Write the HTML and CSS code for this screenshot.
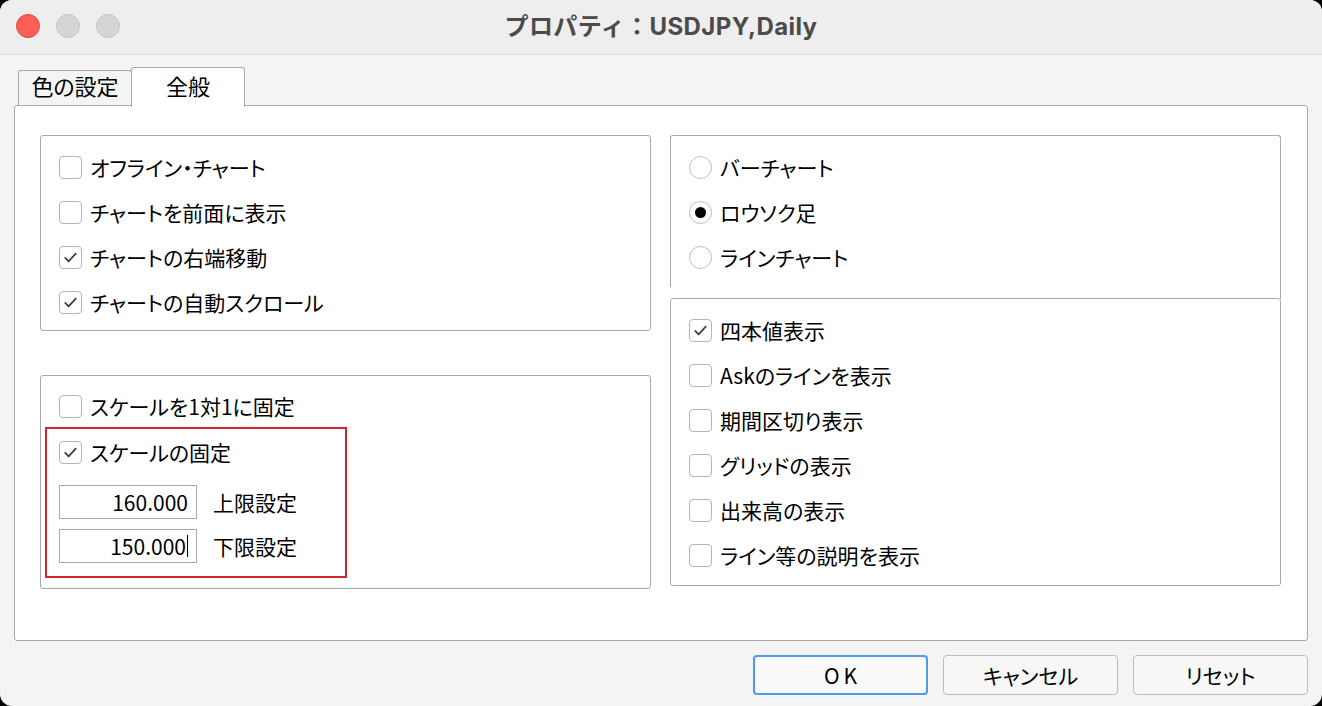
FILE: index.html
```html
<!DOCTYPE html>
<html lang="ja">
<head>
<meta charset="utf-8">
<title>プロパティ</title>
<link rel="stylesheet" href="styles.css">
</head>
<body>
<div class="window">
  <div class="titlebar">
    <div class="lights">
      <span class="light red"></span>
      <span class="light gray"></span>
      <span class="light gray"></span>
    </div>
    <div class="title">プロパティ：USDJPY,Daily</div>
  </div>
  <div class="content">
    <div class="tabs">
      <div class="tab">色の設定</div>
      <div class="tab active">全般</div>
    </div>
    <div class="panel">
      <div class="col">
        <div class="group g1">
          <div class="row"><span class="cb"></span><span class="lbl">オフライン・チャート</span></div>
          <div class="row"><span class="cb"></span><span class="lbl">チャートを前面に表示</span></div>
          <div class="row"><span class="cb checked"><svg viewBox="0 0 22 22"><path d="M5.5 11.5 L9 15 L16.5 7" /></svg></span><span class="lbl">チャートの右端移動</span></div>
          <div class="row"><span class="cb checked"><svg viewBox="0 0 22 22"><path d="M5.5 11.5 L9 15 L16.5 7" /></svg></span><span class="lbl">チャートの自動スクロール</span></div>
        </div>
        <div class="group g2">
          <div class="row first"><span class="cb"></span><span class="lbl">スケールを1対1に固定</span></div>
          <div class="redbox">
            <div class="row"><span class="cb checked"><svg viewBox="0 0 22 22"><path d="M5.5 11.5 L9 15 L16.5 7" /></svg></span><span class="lbl">スケールの固定</span></div>
            <div class="inrow"><span class="input">160.000</span><span class="lbl">上限設定</span></div>
            <div class="inrow"><span class="input">150.000<span class="caret"></span></span><span class="lbl">下限設定</span></div>
          </div>
        </div>
      </div>
      <div class="col">
        <div class="group g3">
          <div class="row"><span class="rb"></span><span class="lbl">バーチャート</span></div>
          <div class="row"><span class="rb on"></span><span class="lbl">ロウソク足</span></div>
          <div class="row"><span class="rb"></span><span class="lbl">ラインチャート</span></div>
        </div>
        <div class="group g4">
          <div class="row"><span class="cb checked"><svg viewBox="0 0 22 22"><path d="M5.5 11.5 L9 15 L16.5 7" /></svg></span><span class="lbl">四本値表示</span></div>
          <div class="row"><span class="cb"></span><span class="lbl">Askのラインを表示</span></div>
          <div class="row"><span class="cb"></span><span class="lbl">期間区切り表示</span></div>
          <div class="row"><span class="cb"></span><span class="lbl">グリッドの表示</span></div>
          <div class="row"><span class="cb"></span><span class="lbl">出来高の表示</span></div>
          <div class="row"><span class="cb"></span><span class="lbl">ライン等の説明を表示</span></div>
        </div>
      </div>
    </div>
    <div class="buttons">
      <div class="btn default">OK</div>
      <div class="btn">キャンセル</div>
      <div class="btn">リセット</div>
    </div>
  </div>
</div>
</body>
</html>
```

FILE: styles.css
```css
* { box-sizing: border-box; }
html, body { margin: 0; padding: 0; }
body {
  background: #000;
  width: 1322px;
  height: 706px;
  overflow: hidden;
  font-family: "Noto Sans CJK JP", "Noto Sans", sans-serif;
  font-feature-settings: "palt";
  color: #000;
}
.window {
  width: 1322px;
  height: 706px;
  border-radius: 12px;
  background: #f4f4f4;
  overflow: hidden;
  display: flex;
  flex-direction: column;
}
.titlebar {
  height: 55px;
  flex: none;
  background: #efeeee;
  border-bottom: 1px solid #d9d9d9;
  position: relative;
  display: flex;
  align-items: center;
  justify-content: center;
}
.lights {
  position: absolute;
  left: 16px;
  top: 14px;
  display: flex;
  gap: 16px;
}
.light {
  width: 24px;
  height: 24px;
  border-radius: 50%;
  display: block;
}
.light.red { background: #fe5f57; border: 1px solid #e5453d; }
.light.gray { background: #d6d5d5; border: 1px solid #c4c3c3; }
.title {
  font-family: Inter, "Noto Sans CJK JP", sans-serif;
  font-feature-settings: normal;
  font-weight: 700;
  font-size: 24px;
  color: #4b4b4b;
  letter-spacing: 0.4px;
  margin-top: -5px;
}
.content {
  flex: 1;
  padding: 11px 14px 0 14px;
  display: flex;
  flex-direction: column;
}
.tabs {
  display: flex;
  align-items: flex-end;
  height: 40px;
  padding-left: 4px;
  position: relative;
  z-index: 2;
}
.tab {
  width: 114px;
  height: 35px;
  border: 1px solid #a9a9a9;
  border-bottom: none;
  border-radius: 3px 3px 0 0;
  background: #f4f4f4;
  font-size: 22px;
  line-height: 29px;
  text-align: center;
  margin-bottom: 1px;
}
.tab.active {
  width: 114px;
  height: 40px;
  margin-left: -1px;
  margin-bottom: -1px;
  background: #fff;
  line-height: 34px;
}
.panel {
  height: 536px;
  margin-top: -1px;
  border: 1px solid #a9a9a9;
  border-radius: 3px;
  background: #fff;
  display: grid;
  grid-template-columns: 611px 611px;
  column-gap: 19px;
  padding: 29px 0 0 25px;
  position: relative;
  z-index: 1;
}
.col {
  display: flex;
  flex-direction: column;
}
.group {
  border: 1px solid #a9a9a9;
  border-radius: 3px;
}
.g1 { height: 196px; padding: 9px 0 0 18px; }
.g2 { height: 214px; margin-top: 44px; padding: 9px 0 0 4px; }
.g2 .row.first { height: 42px; padding-left: 14px; }
.g3 {
  height: 152px;
  padding: 9px 0 0 18px;
  border-bottom: none;
  border-radius: 3px 3px 0 0;
  position: relative;
}
.g3::after {
  content: "";
  position: absolute;
  right: -1px;
  top: 100%;
  width: 1px;
  height: 12px;
  background: #a9a9a9;
}
.g4 { height: 288px; margin-top: 11px; padding: 9px 0 0 18px; }
.row {
  height: 45px;
  display: flex;
  align-items: center;
}
.lbl {
  font-size: 21px;
  line-height: 1;
  white-space: nowrap;
}
.cb {
  width: 23px;
  height: 23px;
  border: 1px solid #b5b5b5;
  border-radius: 4px;
  background: #fff;
  margin-right: 8px;
  flex: none;
  display: flex;
  align-items: center;
  justify-content: center;
}
.cb svg { width: 21px; height: 21px; }
.cb svg path {
  fill: none;
  stroke: #3a3a3a;
  stroke-width: 1.8;
  stroke-linecap: round;
  stroke-linejoin: round;
}
.rb {
  width: 23px;
  height: 23px;
  border: 1px solid #bdbdbd;
  border-radius: 50%;
  background: #fff;
  margin-right: 8px;
  flex: none;
  display: flex;
  align-items: center;
  justify-content: center;
}
.rb.on::after {
  content: "";
  width: 11px;
  height: 11px;
  border-radius: 50%;
  background: #000;
}
.redbox {
  width: 302px;
  height: 151px;
  border: 2px solid #d3232b;
  padding: 0 0 0 12px;
}
.redbox .row { height: 46px; }
.inrow {
  display: flex;
  align-items: center;
  margin-top: 10px;
  height: 34px;
}
.input {
  width: 138px;
  height: 34px;
  border: 1px solid #aaaaaa;
  font-size: 21px;
  line-height: 32px;
  padding-right: 8px;
  margin-right: 16px;
  display: flex;
  justify-content: flex-end;
  align-items: center;
}
.caret {
  display: inline-block;
  width: 1px;
  height: 22px;
  background: #000;
  margin-left: 1px;
}
.buttons {
  display: flex;
  justify-content: flex-end;
  gap: 15px;
  margin-top: 14px;
}
.btn {
  width: 175px;
  height: 40px;
  border: 1px solid #bcbcbc;
  border-radius: 4px;
  background: #f7f7f7;
  font-size: 21px;
  line-height: 38px;
  text-align: center;
}
.btn.default {
  border: 2px solid #4d9ce8;
  line-height: 36px;
  background: #fafafa;
  letter-spacing: 4px;
  padding-left: 4px;
}
```
